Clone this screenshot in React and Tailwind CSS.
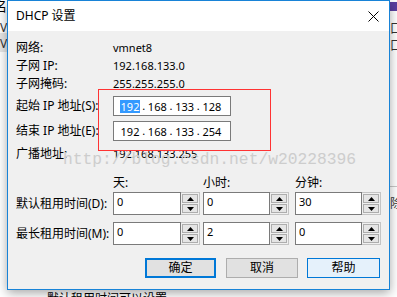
import React from 'react';

const FONT = { fontFamily: '"Noto Sans", "Noto Sans CJK SC", sans-serif' };

const IpBox = ({ parts, selected }) => (
  <div className="flex items-center w-[118px] h-[20px] border border-[#7a7a7a] bg-white pl-[6px] text-[11px] text-black">
    {parts.map((p, i) => (
      <React.Fragment key={i}>
        <span className="w-[20px] flex justify-center">
          <span className={i === 0 && selected ? 'bg-[#3399ff] text-white px-[1px] leading-[13px]' : 'leading-[13px]'}>{p}</span>
        </span>
        {i < 3 && <span className="w-[7.3px] text-center">.</span>}
      </React.Fragment>
    ))}
  </div>
);

const Arrow = ({ up }) => (
  <svg width="7" height="4" viewBox="0 0 7 4">
    {up ? <path d="M0 4 L3.5 0 L7 4 Z" fill="#000" /> : <path d="M0 0 L3.5 4 L7 0 Z" fill="#000" />}
  </svg>
);

const Spinner = ({ value, w }) => (
  <div className={`flex h-[23px] ${w}`}>
    <div className="flex-1 flex items-center pl-[3px] pb-[2px] border border-[#7a7a7a] bg-white text-[11px] text-black">
      {value}
    </div>
    <div className="w-[19px] flex flex-col gap-[1px] p-[1px] border-y border-r border-[#c4c4c4] bg-[#f0f0f0]">
      <div className="flex-1 flex items-center justify-center border border-[#adadad] bg-[#e5e5e5]">
        <Arrow up />
      </div>
      <div className="flex-1 flex items-center justify-center border border-[#adadad] bg-[#e5e5e5]">
        <Arrow />
      </div>
    </div>
  </div>
);

const Row = ({ label, children, className = '' }) => (
  <div className={`flex items-center h-[18px] ${className}`}>
    <div className="w-[97px] shrink-0 text-[12px] text-black whitespace-nowrap">{label}</div>
    <div className="text-[11px] text-black">{children}</div>
  </div>
);

export default function App() {
  return (
    <div className="relative w-[397px] h-[297px] overflow-hidden bg-white" style={FONT}>
      {/* window behind */}
      <div className="absolute left-0 top-[33px] w-[8px] h-[19px] bg-[#e6e6e6]" />
      <div className="absolute left-[-6px] top-[-3px] text-[13px] text-black">名</div>
      <div className="absolute left-0 top-[19px] text-[12px] text-[#333]">V</div>
      <div className="absolute left-0 top-[35px] text-[12px] text-[#333]">V</div>
      <div className="absolute left-[390px] top-[2px] w-[7px] h-[9px] bg-[#5b3fa0]" />
      <div className="absolute left-[390px] top-[20px] text-[12px] text-[#333]">口</div>
      <div className="absolute left-[390px] top-[37px] text-[12px] text-[#333]">口</div>
      <div className="absolute left-[388px] top-[186px] w-[9px] h-px bg-[#c8c8c8]" />
      <div className="absolute left-[390px] top-[195px] text-[12px] text-[#333]">除</div>
      <div className="absolute left-[47px] top-[290px] text-[12px] text-black whitespace-nowrap">默认租用时间可以设置</div>

      {/* dialog */}
      <div className="absolute left-[7px] top-0 w-[383px] h-[290px] border border-[#1883d7] bg-[#f0f0f0] shadow-[0_3px_10px_rgba(0,0,0,0.35)] flex flex-col">
        <div className="h-[30px] bg-white flex items-center justify-between pl-[8px] pr-[10px]">
          <span className="text-[12px] text-black">DHCP 设置</span>
          <svg width="11" height="11" viewBox="0 0 11 11">
            <path d="M0.5 0.5 L10.5 10.5 M10.5 0.5 L0.5 10.5" stroke="#000" strokeWidth="1" />
          </svg>
        </div>

        <div className="flex flex-col pl-[8px] pt-[8px]">
          <Row label="网络:">vmnet8</Row>
          <Row label="子网 IP:">192.168.133.0</Row>
          <Row label="子网掩码:">255.255.255.0</Row>

          <div className="flex items-center h-[20px] mt-[3px]">
            <div className="w-[97px] shrink-0 text-[12px] text-black whitespace-nowrap">起始 IP 地址(S):</div>
            <IpBox parts={['192', '168', '133', '128']} selected />
          </div>
          <div className="flex items-center h-[20px] mt-[5px]">
            <div className="w-[97px] shrink-0 text-[12px] text-black whitespace-nowrap">结束 IP 地址(E):</div>
            <IpBox parts={['192', '168', '133', '254']} />
          </div>
          <Row label="广播地址:" className="mt-[4px]">192.168.133.255</Row>

          <div className="flex items-center h-[18px] mt-[11px] text-[12px] text-black">
            <div className="w-[97px] shrink-0" />
            <div className="w-[90px]">天:</div>
            <div className="w-[92px]">小时:</div>
            <div>分钟:</div>
          </div>
          <div className="flex items-center h-[23px]">
            <div className="w-[97px] shrink-0 text-[12px] text-black whitespace-nowrap">默认租用时间(D):</div>
            <Spinner value="0" w="w-[87px]" />
            <div className="w-[3px]" />
            <Spinner value="0" w="w-[86px]" />
            <div className="w-[6px]" />
            <Spinner value="30" w="w-[86px]" />
          </div>
          <div className="flex items-center h-[23px] mt-[7px]">
            <div className="w-[97px] shrink-0 text-[12px] text-black whitespace-nowrap">最长租用时间(M):</div>
            <Spinner value="0" w="w-[87px]" />
            <div className="w-[3px]" />
            <Spinner value="2" w="w-[86px]" />
            <div className="w-[6px]" />
            <Spinner value="0" w="w-[86px]" />
          </div>

          <div className="flex justify-end pr-[9px] mt-[13px] gap-[10px] text-[12px] text-black">
            <button className="w-[71px] h-[20px] border-2 border-[#0078d7] bg-[#e1e1e1] flex items-center justify-center">确定</button>
            <button className="w-[72px] h-[20px] border border-[#adadad] bg-[#e1e1e1] flex items-center justify-center">取消</button>
            <button className="w-[73px] h-[20px] -ml-px border border-[#0078d7] bg-[#e5f1fb] flex items-center justify-center">帮助</button>
          </div>
        </div>
      </div>

      {/* annotation + watermark overlays */}
      <div className="absolute left-[98px] top-[89px] w-[173px] h-[62px] border border-[#ff3333]" />
      <div
        className="absolute left-[63px] top-[148px] text-[16.3px] text-[#cdcdcd] whitespace-nowrap"
        style={{ fontFamily: '"Liberation Mono", monospace' }}
      >
        http://blog.csdn.net/w20228396
      </div>
    </div>
  );
}
